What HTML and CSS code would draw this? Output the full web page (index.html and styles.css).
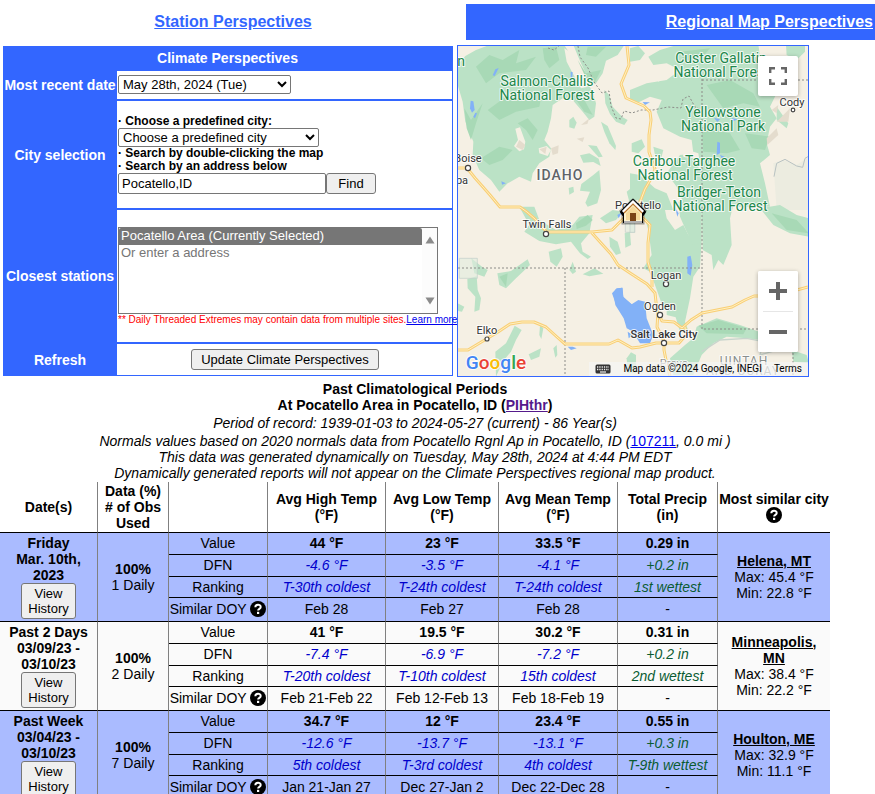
FILE: index.html
```html
<!DOCTYPE html>
<html lang="en">
<head>
<meta charset="utf-8">
<title>Climate Perspectives</title>
<link rel="stylesheet" href="styles.css">
</head>
<body>
<svg class="defs" width="0" height="0" aria-hidden="true">
  <symbol id="help" viewBox="0 0 16 16">
    <circle cx="8" cy="8" r="8" fill="#000"/>
    <path d="M5.3 6.3C5.3 2.9 10.7 2.9 10.7 6C10.7 7.8 8.1 7.8 8.1 9.5" fill="none" stroke="#fff" stroke-width="2"/>
    <rect x="7" y="10.8" width="2.2" height="2.2" fill="#fff"/>
  </symbol>
</svg>

<nav class="tabs">
  <div class="tab"><a href="#station">Station Perspectives</a></div>
  <div class="tab tab-active"><a href="#regional">Regional Map Perspectives</a></div>
</nav>

<div class="top">
  <form class="panel">
    <h2 class="panel-title">Climate Perspectives</h2>
    <label class="name" for="date">Most recent date</label>
    <div class="field field-date">
      <select id="date" class="drop drop-date"><option>May 28th, 2024 (Tue)</option></select>
    </div>
    <label class="name" for="address">City selection</label>
    <div class="field field-city">
      <label class="hint hint-tall" for="city">· Choose a predefined city:</label>
      <select id="city" class="drop drop-city"><option>Choose a predefined city</option></select>
      <span class="hint">· Search by double-clicking the map</span>
      <label class="hint" for="address">· Search by an address below</label>
      <div class="find"><input id="address" type="text" value="Pocatello,ID"><button type="button">Find</button></div>
    </div>
    <label class="name" for="stations">Closest stations</label>
    <div class="field field-stations">
      <div class="listbox">
        <select id="stations" size="5">
          <option selected>Pocatello Area (Currently Selected)</option>
          <option>Or enter a address</option>
        </select>
        <div class="scroll">
          <svg width="10" height="8" viewBox="0 0 10 8"><path d="M5 0.5L9.5 7.5H0.5Z" fill="#8b8b8b"/></svg>
          <svg width="10" height="8" viewBox="0 0 10 8"><path d="M5 7.5L9.5 0.5H0.5Z" fill="#8b8b8b"/></svg>
        </div>
      </div>
      <p class="note">** Daily Threaded Extremes may contain data from multiple sites.<a href="#learn">Learn more</a></p>
    </div>
    <span class="name">Refresh</span>
    <div class="field field-refresh"><button type="submit">Update Climate Perspectives</button></div>
  </form>

  <div class="map">
    <svg class="map-art" viewBox="458 46 350 330" role="img" aria-label="Map of Idaho and surrounding states">
      <rect x="458" y="46" width="350" height="330" fill="#f5f0e4"/>
      <!-- northwest: Salmon-Challis -->
      <g transform="translate(456 40) scale(.33333)">
        <g fill="#bbe2c6">
          <path d="M5 75L28 48L60 30L100 15H325L350 55L375 100L410 155L420 190L415 230L400 240L380 215L350 180L320 175L290 195L285 235L275 275L265 300L285 325L280 350L250 370L230 400L225 425L190 410L155 430L130 455L105 420L70 390L50 345L52 305L28 245L20 185L5 135Z"/>
          <path d="M352 15H505L485 45L450 62L440 100L420 130L395 112L375 70Z"/>
          <path d="M445 150L460 165L470 200L500 232L515 240L505 255L480 245L462 222L448 190Z"/>
          <path d="M435 245L455 258L480 318L478 330L460 310L445 275Z"/>
          <path d="M340 240L352 230L362 248L355 266L340 262Z"/>
          <path d="M396 315L422 318L440 350L428 352L412 334Z"/>
          <path d="M372 346L400 340L428 356L434 378L412 366L382 368Z"/>
          <path d="M376 432L412 405L430 390L435 450L424 490L395 500L388 488L402 455L372 452Z"/>
          <path d="M338 444L352 440L354 456L340 464Z"/>
          <path d="M512 455L530 440L545 448V480L520 485Z"/>
        </g>
        <g fill="#a8d9b6">
          <path d="M25 205L45 240L80 190L60 250L45 300L32 265Z"/>
          <path d="M60 80L100 45L140 60L190 30L180 70L240 50L210 90L130 100L90 130Z"/>
          <path d="M95 210L150 170L220 180L260 150L250 200L180 215L130 240Z"/>
          <path d="M75 355L130 320L170 330L140 360L100 375Z"/>
          <path d="M260 25L300 20L310 60L280 85L265 60Z"/>
          <path d="M365 60L390 100L435 90L415 130L390 115Z"/>
          <path d="M395 20H450L420 50L390 45Z"/>
          <path d="M350 165L385 180L410 225L385 215Z"/>
          <path d="M185 250L215 235L245 270L230 300L210 270Z"/>
        </g>
        <g fill="#f5f0e4">
          <path d="M178 266L192 262L208 305L204 328L190 334L174 318L186 300Z"/>
          <path d="M325 25L348 40L376 100L395 140L375 145L350 100L332 65Z"/>
          <path d="M248 325L272 318L285 330L275 348L250 340Z"/>
        </g>
        <g fill="#e4dccd">
          <path d="M250 328L272 320L268 342Z"/><path d="M285 325L308 316L306 340L290 345Z"/>
          <path d="M362 296L385 292L380 306Z"/><path d="M375 255L400 235L394 252Z"/><path d="M190 300L208 315L200 330L180 320Z"/>
        </g>
        <g fill="#82b1f7">
          <path d="M44 182L52 184L56 210L48 218L42 205Z"/><path d="M58 218L63 220L57 235L52 230Z"/><path d="M118 88L128 84L116 108L110 106Z"/><path d="M136 424L150 430L138 434Z"/><path d="M344 95L350 97L348 122L344 118Z"/>
        </g>
      </g>
      <!-- northeast: Yellowstone, Tetons -->
      <g transform="translate(630 40) scale(.33333)">
        <g fill="#bbe2c6">
          <path d="M0 25L25 18L45 40L30 60L0 65Z"/>
          <path d="M55 50L90 30L140 15H385L400 110L430 125L440 160L420 200L440 235L420 260L410 310L420 345L390 370L405 430L420 500H165L140 440L110 400L150 345L190 340L185 300L150 290L100 265L80 215L95 180L60 170L20 190L0 180V150L50 130L110 120L150 90L110 70L70 75Z"/>
          <path d="M5 310L35 298L45 320L25 340L5 335Z"/>
          <path d="M70 320L100 330L95 350L75 345Z"/>
          <path d="M0 400L30 405L75 445L110 460L130 510H40L20 475L0 460Z"/>
          <path d="M468 15H525V35L500 60L470 45Z"/>
          <path d="M440 200L475 250L470 265L440 240Z"/>
        </g>
        <g fill="#a8d9b6">
          <path d="M215 265L300 280L330 330L290 340L220 335Z"/>
          <path d="M230 135L300 120L370 160L390 200L340 190L280 205Z"/>
          <path d="M345 280L420 290L405 330L365 325Z"/><path d="M150 35L240 25L210 60L160 60Z"/>
        </g>
        <g fill="#f5f0e4">
          <path d="M75 95L110 80L115 105L85 125Z"/><path d="M155 325L205 340L215 400L190 355L160 350Z"/><path d="M395 385L420 375L435 400L410 405Z"/>
        </g>
        <path d="M430 370L460 360L500 375L537 350V510H440Z" fill="#ecece0"/>
        <path d="M432 410L440 370L465 358L500 378L518 382L525 355L537 348" fill="none" stroke="#b9c2c2" stroke-width="3"/>
        <g fill="#e4dccd"><path d="M410 295L440 265L445 285L412 315Z"/><path d="M440 245L480 205L475 245Z"/><path d="M425 210L445 195L440 220Z"/></g>
        <g fill="#82b1f7"><path d="M262 305L270 308V340L260 345Z"/><path d="M38 186L60 187L45 195Z"/><path d="M252 233L270 238L262 246Z"/><path d="M305 234L323 238L310 244Z"/><path d="M270 345L284 350L278 360Z"/></g>
      </g>
      <!-- southwest: Snake River plain, Nevada -->
      <g transform="translate(456 205) scale(.33333)">
        <g fill="#bbe2c6">
          <path d="M190 5H235L250 45L300 75L350 60L370 35L410 30L400 85L375 115L380 140L405 155L395 162L372 145L345 110L300 118L250 108L205 80L220 60Z"/>
          <path d="M278 140L315 130L320 155L302 185L283 170Z"/>
          <path d="M432 40L470 15L500 20L480 45L450 55Z"/>
          <path d="M460 95L485 110L495 145L480 150L462 125Z"/><path d="M506 85L522 80L525 120L508 128Z"/>
          <path d="M46 160L78 185L95 195L85 215L55 205Z"/>
          <path d="M34 222L62 214L65 255L75 280L70 315L55 320L58 275L35 250Z"/>
          <path d="M124 205L165 198L215 163L222 180L180 220L150 250L130 240Z"/>
          <path d="M380 208L415 190L442 206L400 214Z"/><path d="M5 295L25 305L18 320L5 318Z"/>
          <path d="M340 195L350 170L360 200L350 207Z"/>
          <path d="M176 362L197 375L180 405L165 440L140 470L120 515L118 440L150 415Z"/>
          <path d="M252 360L262 370L256 402L250 390Z"/><path d="M218 448L255 430L250 455L225 465Z"/><path d="M292 430L302 420L304 450L298 458Z"/>
          <path d="M512 460L525 442L540 450V505H515Z"/>
        </g>
        <path d="M360 55L395 30L410 45L390 62L362 72Z" fill="#a8d9b6"/>
        <path d="M130 215L155 205L150 245Z" fill="#a8d9b6"/>
        <g fill="#e1ecdf" fill-opacity=".6" stroke="#c0cec8" stroke-width="2"><path d="M10 160H64V220H10Z"/><path d="M508 55H536V82H508Z"/></g>
        <g fill="#82b1f7">
          <path d="M472 265L480 252L498 248L502 275L540 310V385L512 370L503 340L478 300Z"/>
          <path d="M515 380L530 390L518 400Z"/><path d="M335 425H350L362 430L345 435Z"/><path d="M484 30L498 22L488 40Z"/>
        </g>
      </g>
      <!-- southeast: Wasatch, Uintas -->
      <g transform="translate(630 205) scale(.33333)">
        <g fill="#bbe2c6">
          <path d="M30 -10H100L110 40L135 75L160 60L175 90L215 110L210 185L190 215L180 280L165 350L178 385L150 380L135 330L100 310L75 240L60 200L40 190L65 150L55 75Z"/>
          <path d="M145 -10H215V110L190 120L170 80L150 35Z"/>
          <path d="M215 0H310L300 40L305 120L280 180L265 165L250 195L245 150L218 135Z"/>
          <path d="M390 10L450 0L500 30L537 40V95L480 85L430 60Z"/>
          <path d="M200 365L260 340L330 360L400 385L430 410L350 400L290 395L250 415L215 450L190 510H130L120 460L165 420L190 400Z"/>
          <path d="M110 260L160 270L150 340L110 330Z"/>
          <path d="M485 435L530 450L537 475L490 470Z"/>
        </g>
        <g fill="#a8d9b6"><path d="M425 25L500 45L537 85L470 75Z"/><path d="M205 362L265 345L350 370L340 388L230 385Z"/></g>
        <path d="M215 440L270 405L350 400L400 410L390 450L460 430" fill="none" stroke="#c9d5cd" stroke-width="4"/>
        <g fill="#82b1f7">
          <path d="M-54 265L-40 250L-22 248L-20 278L5 298L25 285L45 290L50 340L70 390L60 415L30 415L0 365L-20 330L-45 290Z"/>
          <path d="M172 155L182 152L187 180L182 212L172 205Z"/><path d="M136 10L146 25L142 35Z"/>
        </g>
        <path d="M0 50H14V82H0Z" fill="#e1ecdf" stroke="#c0cec8" stroke-width="2"/>
      </g>

      <g fill="none" stroke="#8c8c88" stroke-width="1" stroke-dasharray="2 2">
        <path d="M458 268H702M565 268V376M702 79V329H808M702 80H808M793 353V376"/>
        <path d="M548 48L554 50L559 46M578 46L580 57L588 68L594 82L602 93L609 91L611 106L616 118L621 119L624 111L632 113L641 110L653 110L668 107L681 108L683 99L689 96L695 107L702 110"/>
      </g>

      <g class="road">
        <path d="M458 168H467L475 178L483 187L490 195L500 207H520L527 212L535 219L541 226L547 232H592L612 230L622 220L640 202L645 189L652 177L655 169L649 152V135L651 120L650 112L644 106L635 102L626 98L621 84L629 65L627 46"/>
        <path d="M592 233L601 243L611 254L618 265L630 273L647 284L655 293L657 311L662 321L674 322L682 328L691 320L702 313L717 310L732 307L745 300L754 296H775L808 287"/>
        <path d="M642 217L650 225L648 243V262L652 275V287"/>
        <path d="M458 350L468 350L483 341L498 332L510 324L522 322H534L546 327L557 337L565 344H609L618 340L632 348L640 347L656 343H679L686 335L685 327"/>
        <path d="M658 312L657 327L664 341V350L667 365L670 376"/>
      </g>
      <g class="road-core">
        <path d="M458 168H467L475 178L483 187L490 195L500 207H520L527 212L535 219L541 226L547 232H592L612 230L622 220L640 202L645 189L652 177L655 169L649 152V135L651 120L650 112L644 106L635 102L626 98L621 84L629 65L627 46"/>
        <path d="M592 233L601 243L611 254L618 265L630 273L647 284L655 293L657 311L662 321L674 322L682 328L691 320L702 313L717 310L732 307L745 300L754 296H775L808 287"/>
        <path d="M642 217L650 225L648 243V262L652 275V287"/>
        <path d="M458 350L468 350L483 341L498 332L510 324L522 322H534L546 327L557 337L565 344H609L618 340L632 348L640 347L656 343H679L686 335L685 327"/>
        <path d="M658 312L657 327L664 341V350L667 365L670 376"/>
      </g>

      <g fill="#fff" stroke="#444" stroke-width="1.2">
        <circle cx="468" cy="168" r="2.6"/><circle cx="546" cy="234" r="2.6"/><circle cx="487" cy="339" r="2"/><circle cx="793" cy="110" r="1.8"/>
        <circle cx="666" cy="284" r="2.6"/><circle cx="660" cy="315" r="2.6"/><circle cx="664" cy="343" r="2.6"/>
      </g>

      <g class="park">
        <text x="547" y="86">Salmon-Challis</text><text x="547" y="100">National Forest</text>
        <text x="721" y="63">Custer Gallatin</text><text x="721" y="77">National Forest</text>
        <text x="723" y="117">Yellowstone</text><text x="723" y="131">National Park</text>
        <text x="684" y="166">Caribou-Targhee</text><text x="685" y="180">National Forest</text>
        <text x="719" y="197">Bridger-Teton</text><text x="720" y="211">National Forest</text>
        <text x="461" y="66">n</text>
      </g>
      <g class="town">
        <text x="468" y="162">Boise</text><text x="462" y="184">pa</text>
        <text x="547" y="228">Twin Falls</text><text x="638" y="209">Pocatello</text>
        <text x="792" y="106">Cody</text><text x="666" y="279">Logan</text><text x="660" y="310">Ogden</text>
        <text class="big" x="664" y="338">Salt Lake City</text><text x="487" y="334">Elko</text>
        <text x="674" y="367" fill-opacity=".5">Provo</text>
      </g>
      <text class="state" x="560" y="180">IDAHO</text>
      <text class="county" x="744" y="365">UINTAH</text>
      <text class="county" x="743" y="375">AND OURAY</text>

      <!-- home marker -->
      <g transform="translate(620 198)">
        <path d="M13 2L25 13L23 16V25H3V16L1 13Z" fill="#000" stroke="#000" stroke-opacity=".35" stroke-width="3"/>
        <path d="M1 14L13 2L25 14L23 17H3Z" fill="#000" stroke="#000" stroke-width="2" stroke-linejoin="round"/>
        <path d="M13 5L22 14V23H4V14Z" fill="#fff3cf"/>
        <path d="M13 8L20 15V22H6V15Z" fill="#f5d99a"/>
        <path d="M3 14L13 4L23 14" fill="none" stroke="#fff" stroke-width="3"/>
        <path d="M4 15L13 6L22 15" fill="none" stroke="#b97328" stroke-width="1.2"/>
        <rect x="10" y="15" width="6" height="8" fill="#7a4416"/>
        <path d="M4 24H22" stroke="#fff" stroke-width="1.4"/>
      </g>

      <text class="brand" x="496" y="369"><tspan fill="#4285f4">G</tspan><tspan fill="#ea4335">o</tspan><tspan fill="#fbbc05">o</tspan><tspan fill="#4285f4">g</tspan><tspan fill="#34a853">l</tspan><tspan fill="#ea4335">e</tspan></text>
    </svg>

    <button class="ctl full" type="button" aria-label="Fullscreen">
      <svg width="18" height="18" viewBox="0 0 18 18"><path d="M1.2 6V1.2H6M12 1.2H16.8V6M16.8 12V16.8H12M6 16.8H1.2V12" fill="none" stroke="#666" stroke-width="2.4"/></svg>
    </button>
    <div class="zoom">
      <button class="ctl" type="button" aria-label="Zoom in"><svg width="18" height="18" viewBox="0 0 18 18"><path d="M0 9H18M9 0V18" stroke="#666" stroke-width="4"/></svg></button>
      <button class="ctl" type="button" aria-label="Zoom out"><svg width="18" height="18" viewBox="0 0 18 18"><path d="M0 9H18" stroke="#666" stroke-width="4"/></svg></button>
    </div>
    <div class="credit">
      <svg class="keys" width="16" height="11" viewBox="0 0 16 11"><rect x=".5" y=".5" width="15" height="9" rx="1.5" fill="#333"/><path d="M2 3H14M2 5.5H14" stroke="#eee" stroke-width="1.3" stroke-dasharray="1.3 1"/><path d="M5 8H11" stroke="#eee" stroke-width="1.2"/></svg>
      <span>Map data ©2024 Google, INEGI</span><a href="#terms">Terms</a>
    </div>
  </div>
</div>

<main class="report">
  <header class="intro">
    <h1>Past Climatological Periods<br>At Pocatello Area in Pocatello, ID (<a class="seen" href="#pih">PIHthr</a>)</h1>
    <p>Period of record: 1939-01-03 to 2024-05-27 (current) - 86 Year(s)</p>
    <p>Normals values based on 2020 normals data from Pocatello Rgnl Ap in Pocatello, ID (<a class="code" href="#normals">107211</a>, 0.0 mi )<br>This data was generated dynamically on Tuesday, May 28th, 2024 at 4:44 PM EDT<br>Dynamically generated reports will not appear on the Climate Perspectives regional map product.</p>
  </header>

  <table class="data">
    <colgroup><col class="c-date"><col class="c-obs"><col class="c-kind"><col class="c-high"><col class="c-low"><col class="c-mean"><col class="c-rain"><col class="c-city"></colgroup>
    <thead>
      <tr><th>Date(s)</th><th>Data (%)<br># of Obs<br>Used</th><th></th><th>Avg High Temp<br>(°F)</th><th>Avg Low Temp<br>(°F)</th><th>Avg Mean Temp<br>(°F)</th><th>Total Precip<br>(in)</th><th>Most similar city<br><svg class="help" role="img" aria-label="Help"><use href="#help"/></svg></th></tr>
    </thead>
    <tbody class="blue">
      <tr class="value"><th rowspan="4">Friday<br>Mar. 10th,<br>2023<br><button type="button">View<br>History</button></th><td rowspan="4"><b>100%</b><br>1 Daily</td><td>Value</td><td>44 °F</td><td>23 °F</td><td>33.5 °F</td><td>0.29 in</td><td rowspan="4" class="city"><a href="#helena">Helena, MT</a><br>Max: 45.4 °F<br>Min: 22.8 °F</td></tr>
      <tr class="cmp"><td>DFN</td><td>-4.6 °F</td><td>-3.5 °F</td><td>-4.1 °F</td><td>+0.2 in</td></tr>
      <tr class="cmp rank"><td>Ranking</td><td>T-30th coldest</td><td>T-24th coldest</td><td>T-24th coldest</td><td>1st wettest</td></tr>
      <tr class="doy"><td>Similar DOY <svg class="help" role="img" aria-label="Help"><use href="#help"/></svg></td><td>Feb 28</td><td>Feb 27</td><td>Feb 28</td><td>-</td></tr>
    </tbody>
    <tbody>
      <tr class="value"><th rowspan="4">Past 2 Days<br>03/09/23 -<br>03/10/23<br><button type="button">View<br>History</button></th><td rowspan="4"><b>100%</b><br>2 Daily</td><td>Value</td><td>41 °F</td><td>19.5 °F</td><td>30.2 °F</td><td>0.31 in</td><td rowspan="4" class="city"><a href="#minneapolis">Minneapolis,<br>MN</a><br>Max: 38.4 °F<br>Min: 22.2 °F</td></tr>
      <tr class="cmp"><td>DFN</td><td>-7.4 °F</td><td>-6.9 °F</td><td>-7.2 °F</td><td>+0.2 in</td></tr>
      <tr class="cmp rank"><td>Ranking</td><td>T-20th coldest</td><td>T-10th coldest</td><td>15th coldest</td><td>2nd wettest</td></tr>
      <tr class="doy"><td>Similar DOY <svg class="help" role="img" aria-label="Help"><use href="#help"/></svg></td><td>Feb 21-Feb 22</td><td>Feb 12-Feb 13</td><td>Feb 18-Feb 19</td><td>-</td></tr>
    </tbody>
    <tbody class="blue">
      <tr class="value"><th rowspan="4">Past Week<br>03/04/23 -<br>03/10/23<br><button type="button">View<br>History</button></th><td rowspan="4"><b>100%</b><br>7 Daily</td><td>Value</td><td>34.7 °F</td><td>12 °F</td><td>23.4 °F</td><td>0.55 in</td><td rowspan="4" class="city"><a href="#houlton">Houlton, ME</a><br>Max: 32.9 °F<br>Min: 11.1 °F</td></tr>
      <tr class="cmp"><td>DFN</td><td>-12.6 °F</td><td>-13.7 °F</td><td>-13.1 °F</td><td>+0.3 in</td></tr>
      <tr class="cmp rank"><td>Ranking</td><td>5th coldest</td><td>T-3rd coldest</td><td>4th coldest</td><td>T-9th wettest</td></tr>
      <tr class="doy"><td>Similar DOY <svg class="help" role="img" aria-label="Help"><use href="#help"/></svg></td><td>Jan 21-Jan 27</td><td>Dec 27-Jan 2</td><td>Dec 22-Dec 28</td><td>-</td></tr>
    </tbody>
  </table>
</main>
</body>
</html>
```
FILE: styles.css
```css
* { box-sizing: border-box; }
html { scrollbar-width: none; }
body {
  margin: 0;
  padding-top: 4px;
  background: #fff;
  color: #000;
  font: 14px/16px "Liberation Sans", Arial, sans-serif;
}
.defs { position: absolute; }
a { color: #00e; }
h1, h2, p { margin: 0; font-size: inherit; }
button, select, input { font: 13px/15px "Liberation Sans", Arial, sans-serif; color: #000; }
button { background: #efefef; border: 1px solid #767676; border-radius: 3px; }

/* tabs */
.tabs { display: flex; height: 36px; font-size: 16px; line-height: 36px; font-weight: bold; }
.tab { width: 466px; text-align: center; }
.tab a { color: #36f; }
.tab-active { flex: 1; padding-right: 2px; background: #36f; text-align: right; }
.tab-active a { color: #fff; }

/* selection form */
.top { display: flex; align-items: flex-start; gap: 4px; padding: 5px 0 0 3px; }
.panel {
  display: grid;
  grid-template-columns: 114px 335px;
  margin-top: 1px;
  padding: 0 1px 1px 0;
  row-gap: 2px;
  background: #36f;
}
.panel-title { grid-column: 1 / -1; height: 23px; line-height: 25px; color: #fff; text-align: center; }
.name { align-self: center; color: #fff; font-weight: bold; text-align: center; white-space: nowrap; }
.field { padding-left: 1px; background: #fff; }
.field-date { height: 28px; padding-top: 4px; }
.field-city { display: flex; flex-direction: column; align-items: flex-start; height: 107px; padding-top: 14px; }
.field-stations { height: 132px; padding-top: 17px; }
.field-refresh { height: 31px; padding-top: 5px; text-align: center; }
.drop {
  display: block;
  height: 19px;
  padding: 0;
  border: 1px solid #767676;
  border-radius: 2px;
  background: #fff;
}
.drop-date { width: 173px; }
.drop-city { width: 201px; }
.hint { font-size: 12px; line-height: 13px; font-weight: bold; }
.find { display: flex; height: 21px; }
.find input { width: 208px; padding: 0 3px; border: 1px solid #767676; border-radius: 2px; }
.find button { width: 50px; padding: 0; }
.listbox { display: flex; width: 320px; height: 87px; border: 1px solid #767676; }
.listbox select { flex: 1; padding: 0; border: 0; background: #fff; outline: 0; scrollbar-width: none; }
.listbox option { height: 17px; min-height: 17px; padding: 0 2px; line-height: 17px; color: #767676; }
.listbox option:checked { background: linear-gradient(#767676, #767676); color: #fff; }
.scroll { display: flex; flex-direction: column; justify-content: space-between; align-items: center; width: 15px; padding: 8px 0; background: #fcfcfc; }
.note { font-size: 10px; line-height: 12px; color: #f00; white-space: nowrap; }
.field-refresh button { width: 188px; height: 21px; padding: 0; }

/* map */
.map { position: relative; width: 352px; border: 1px solid #36f; overflow: hidden; font-family: Roboto, sans-serif; }
.map-art { display: block; width: 100%; }
.map-art text { text-anchor: middle; paint-order: stroke; stroke: #fff; stroke-width: 2px; stroke-linejoin: round; stroke-opacity: .8; }
.park { font-size: 14px; fill: #21874b; }
.town { font-size: 11px; fill: #333; }
.town .big { font-weight: 500; }
.map-art .state { font-size: 14px; font-weight: 500; letter-spacing: 1px; fill: #5f6368; }
.map-art .county { font-size: 12px; fill: #8a8f8c; letter-spacing: 1px; }
.map-art .brand { font: 500 19px Roboto, sans-serif; }
.road path { fill: none; stroke: #f9cf76; stroke-width: 3px; stroke-linejoin: round; }
.road-core path { fill: none; stroke: #fff0c2; stroke-width: 1px; stroke-linejoin: round; }
.ctl { display: grid; place-items: center; width: 40px; height: 40px; padding: 0; border: 0; border-radius: 2px; background: #fff; }
.full { position: absolute; top: 10px; right: 10px; box-shadow: 0 1px 4px rgba(0, 0, 0, .3); }
.zoom { position: absolute; right: 10px; bottom: 24px; width: 40px; border-radius: 2px; background: #fff; box-shadow: 0 1px 4px rgba(0, 0, 0, .3); }
.zoom .ctl + .ctl { position: relative; height: 41px; }
.zoom .ctl + .ctl::before { content: ""; position: absolute; top: 0; left: 5px; right: 5px; height: 1px; background: #e6e6e6; }
.credit { position: absolute; right: 0; bottom: 0; display: flex; align-items: center; height: 14px; padding: 0 6px; gap: 12px; font-size: 10px; background: rgba(245, 245, 245, .7); }
.credit a { color: #000; text-decoration: none; }

/* report */
.report { max-width: 830px; }
.intro { padding-top: 4px; text-align: center; }
.intro h1 { margin-bottom: 2px; }
.intro p { font-style: italic; }
.intro p + p { margin-top: 2px; }
.seen { color: #551a8b; }
.code { font-style: normal; }

.data { width: 100%; margin-top: 1px; border-collapse: separate; border-spacing: 0; table-layout: fixed; text-align: center; }
.c-date { width: 98px; }
.c-obs { width: 71px; }
.c-kind { width: 99px; }
.c-high { width: 118px; }
.c-low { width: 113px; }
.c-mean { width: 119px; }
.c-rain { width: 100px; }
.data th, .data td { padding: 0; border-right: 1px solid #808080; border-bottom: 1px solid #000; }
.data thead th { height: 51px; }
.data thead th:last-child, .data .city { border-right: 0; }
.data tbody { background: #fafafa; }
.data .blue { background: #abf; }
.data tbody tr { height: 22px; }
.data tbody th, .data tbody td { padding-bottom: 1px; }
.data tbody .rank { height: 21px; }
.data tbody .rank td { padding-bottom: 0; }
.data tbody .doy { height: 24px; }
.value td:not([rowspan]) { font-weight: bold; }
.data .value td:nth-child(3) { font-weight: normal; }
.cmp td { color: #00c; font-style: italic; }
.cmp td:first-child { color: #000; font-style: normal; }
.cmp td:last-child { color: #0a5c32; }
.data th button { display: block; width: 55px; height: 36px; margin: 0 auto; padding: 0; }
.city a { color: #000; font-weight: bold; }
.help { width: 16px; height: 16px; vertical-align: -3px; }
thead .help { display: block; margin: 0 auto; }
.doy td { white-space: nowrap; }
```
